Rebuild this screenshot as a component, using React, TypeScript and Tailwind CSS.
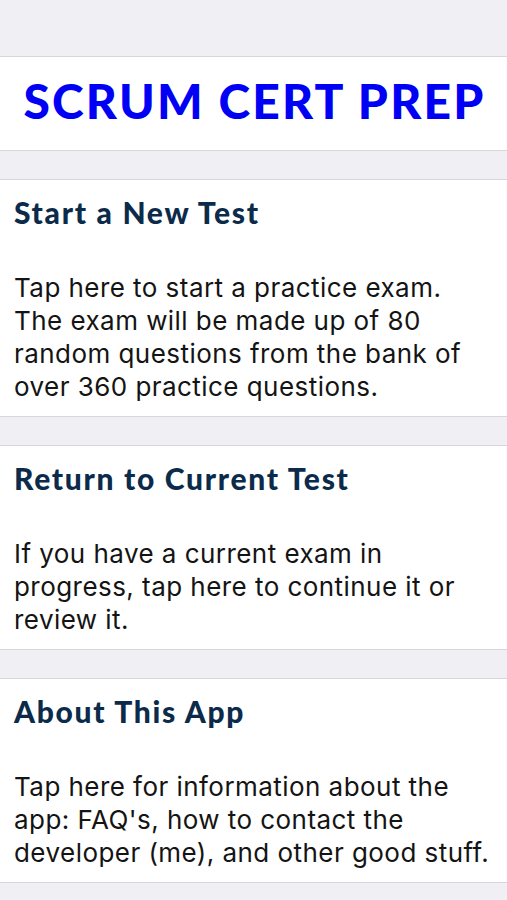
const ITEMS = [
  {
    title: 'Start a New Test',
    body: [
      'Tap here to start a practice exam.',
      'The exam will be made up of 80',
      'random questions from the bank of',
      'over 360 practice questions.',
    ],
  },
  {
    title: 'Return to Current Test',
    body: ['If you have a current exam in', 'progress, tap here to continue it or', 'review it.'],
  },
  {
    title: 'About This App',
    body: [
      'Tap here for information about the',
      "app: FAQ's, how to contact the",
      'developer (me), and other good stuff.',
    ],
  },
]

export default function App() {
  return (
    <div className="min-h-[900px] w-[507px] bg-[#efeff4] pt-[56px]">
      <header className="flex h-[95px] items-center justify-center border-y border-[#d6d6db] bg-white pb-[6px] pl-[2px]">
        <h1
          className="text-[48px] font-black leading-none tracking-[2.2px] text-[#0000f5]"
          style={{ fontFamily: 'Lato, "Noto Sans", sans-serif' }}
        >
          SCRUM CERT PREP
        </h1>
      </header>

      <div className="flex flex-col gap-[28px] pt-[28px]">
        {ITEMS.map(item => (
          <button
            key={item.title}
            className="block w-full border-y border-[#d6d6db] bg-white px-[14px] pt-[15px] pb-[13px] text-left"
          >
            <h2
              className="text-[30px] font-black leading-[34px] tracking-[1.7px] text-[#0c2b4b]"
              style={{ fontFamily: 'Lato, "Noto Sans", sans-serif' }}
            >
              {item.title}
            </h2>
            <p
              className="mt-[42px] text-[26px] leading-[33px] tracking-[0.45px] text-[#141414]"
              style={{ fontFamily: 'Inter, "Liberation Sans", sans-serif' }}
            >
              {item.body.map(line => (
                <span key={line} className="block whitespace-nowrap">
                  {line}
                </span>
              ))}
            </p>
          </button>
        ))}
      </div>
    </div>
  )
}
